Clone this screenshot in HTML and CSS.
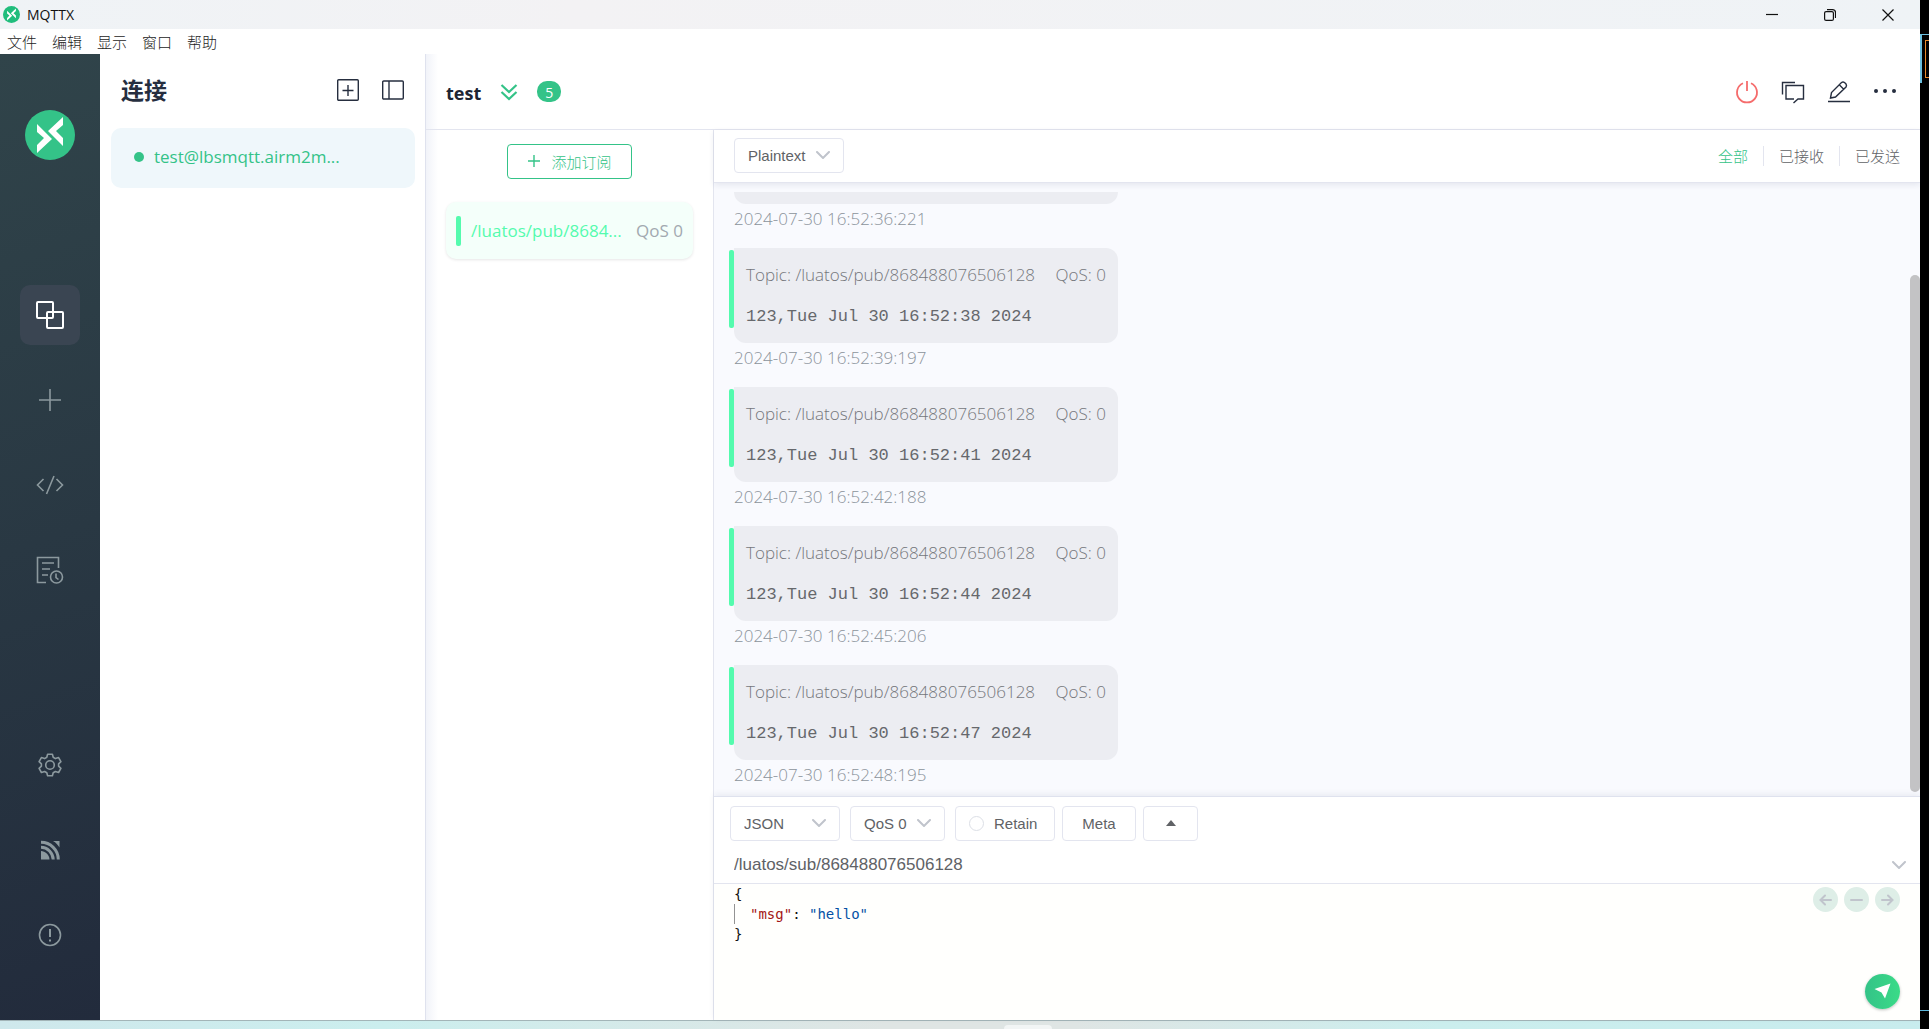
FILE: index.html
```html
<!DOCTYPE html>
<html lang="zh-CN">
<head>
<meta charset="utf-8">
<title>MQTTX</title>
<link rel="stylesheet" href="styles.css">
</head>
<body>
<svg class="defs" aria-hidden="true">
  <symbol id="logo" viewBox="0 0 50 50">
    <circle cx="25" cy="25" r="25"/>
    <path fill="#fff" d="M38 7v8l-7 6 7 7v8L23 21zM12 14l15 15-15 14v-8l7-7-7-6z"/>
  </symbol>
  <symbol id="chevron" viewBox="0 0 14 8"><path d="M1 1l6 6 6-6" fill="none" stroke="#c0c4cc" stroke-width="2" stroke-linecap="round"/></symbol>
</svg>
<div class="desktop">
  <div class="window">
    <header class="titlebar">
      <svg class="app-icon"><use href="#logo"/></svg>
      <span class="app-name">MQTTX</span>
      <div class="win-controls">
        <button aria-label="最小化"><svg width="12" height="12" viewBox="0 0 12 12"><path d="M0 5.5h12"/></svg></button>
        <button aria-label="还原"><svg width="12" height="12" viewBox="0 0 12 12"><rect x=".6" y="2.6" width="8.8" height="8.8" rx="1.5"/><path d="M3 .6h5.5a3 3 0 0 1 3 3V9"/></svg></button>
        <button aria-label="关闭"><svg width="12" height="12" viewBox="0 0 12 12"><path d="M.5.5l11 11M11.5.5l-11 11"/></svg></button>
      </div>
    </header>
    <nav class="menubar">
      <button>文件</button><button>编辑</button><button>显示</button><button>窗口</button><button>帮助</button>
    </nav>
    <div class="body">
      <aside class="leftbar">
        <svg class="logo"><use href="#logo"/></svg>
        <nav class="nav-group">
          <button class="nav-item active" aria-label="连接"><svg width="28" height="28" viewBox="0 0 28 28"><rect x="1" y="1" width="16" height="16" rx="1"/><rect x="11" y="11" width="16" height="16" rx="1"/></svg></button>
          <button class="nav-item" aria-label="新建"><svg width="28" height="28" viewBox="0 0 28 28"><path d="M14 3v22M3 14h22"/></svg></button>
          <button class="nav-item" aria-label="脚本"><svg width="28" height="28" viewBox="0 0 28 28"><path d="M7.500 8l-6 6 6 6M20.500 8l6 6-6 6M18 5l-7.500 18"/></svg></button>
          <button class="nav-item" aria-label="日志"><svg width="28" height="28" viewBox="0 0 28 28"><path d="M10 26.500H1.500v-25h21V12M6 7h12M6 13h8M6 19h6"/><circle cx="20.500" cy="21" r="6"/><path d="M20 17.500v4l2.500 2"/></svg></button>
        </nav>
        <nav class="nav-group bottom">
          <button class="nav-item" aria-label="设置"><svg width="28" height="28" viewBox="0 0 28 28"><circle cx="14" cy="14" r="4.300"/><path stroke-linejoin="round" d="M11.600 3.200h4.800l.8 3.100 2.200 1.300 3.200-1 2.300 4.100-2.300 2.200v2.300l2.300 2.200-2.300 4.100-3.200-1-2.200 1.300-.8 3h-4.800l-.8-3-2.200-1.300-3.200 1-2.300-4.100 2.300-2.200v-2.300l-2.300-2.200 2.300-4.100 3.200 1 2.200-1.300z"/></svg></button>
          <button class="nav-item" aria-label="订阅源"><svg width="28" height="28" viewBox="0 0 28 28"><path class="solid" d="M5 15c4 0 8.500 4 8.500 8.500H5z"/><path stroke-width="3" d="M5 11.300c6.500 0 12.200 5.700 12.200 12.200M5 6.300c9.500 0 17.300 7.700 17.300 17.200"/><path class="solid" d="M17 5h6.500v6.500C22 9 20 6.500 17 5z"/></svg></button>
          <button class="nav-item" aria-label="关于"><svg width="28" height="28" viewBox="0 0 28 28"><circle cx="14" cy="14" r="10.500"/><path stroke-width="2" d="M14 8v8M14 18.500v2"/></svg></button>
        </nav>
      </aside>

      <section class="connections">
        <div class="conn-head">
          <h1>连接</h1>
          <button aria-label="新建连接"><svg width="24" height="24" viewBox="0 0 24 24"><rect x="1.700" y="1.700" width="20.600" height="20.600" rx="1"/><path d="M12 7v11M6.500 12.500h11"/></svg></button>
          <button aria-label="折叠列表"><svg width="24" height="24" viewBox="0 0 24 24"><rect x="1.700" y="3" width="20.600" height="18" rx="1"/><path d="M8 3v18"/></svg></button>
        </div>
        <a class="conn-item" href="#test"><i class="dot"></i>test@lbsmqtt.airm2m...</a>
      </section>

      <main class="main">
        <header class="main-head">
          <h2>test</h2>
          <button class="fold" aria-label="展开"><svg width="18" height="18" viewBox="0 0 18 18"><path d="M1.500 2l7.500 7 7.500-7M1.500 9l7.500 7 7.500-7"/></svg></button>
          <span class="badge">5</span>
          <div class="actions">
            <button class="danger" aria-label="断开连接"><svg width="24" height="24" viewBox="0 0 24 24"><path d="M8 3.300a10 10 0 1 0 8 0M12 1v10"/></svg></button>
            <button aria-label="新窗口"><svg width="24" height="24" viewBox="0 0 24 24"><path d="M1.500 14.500v-12H14M13 19H5V5.500h17.500V19H17l-4.500 4"/></svg></button>
            <button aria-label="编辑"><svg width="24" height="24" viewBox="0 0 24 24"><path d="M1 21.500h22M3.500 18l1-5.500L14.500 2.500q1.500-1 3 0l1.500 1.500q1 1.500 0 3L8.500 17zM12.500 5l4 4"/></svg></button>
            <button aria-label="更多"><svg width="24" height="24" viewBox="0 0 24 24"><path class="dots" d="M3 11h.01M12 11h.01M21 11h.01"/></svg></button>
          </div>
        </header>
        <div class="content">
          <section class="subs">
            <button class="add-sub"><svg width="14" height="14" viewBox="0 0 14 14"><path d="M7 1v12M1 7h12"/></svg>添加订阅</button>
            <a class="sub-item" href="#sub"><i class="mark"></i><span class="topic">/luatos/pub/8684...</span><span class="qos">QoS 0</span></a>
          </section>
          <section class="chat">
            <div class="filter">
              <label class="picker"><select aria-label="格式"><option>Plaintext</option></select><svg class="arrow"><use href="#chevron"/></svg></label>
              <div class="tabs"><button class="on">全部</button><button>已接收</button><button>已发送</button></div>
            </div>
            <div class="messages">
              <div class="list">
                <article><div class="bubble"></div><time>2024-07-30 16:52:36:221</time></article>
                <article><div class="bubble"><p class="meta"><span>Topic: /luatos/pub/868488076506128</span><span>QoS: 0</span></p><pre>123,Tue Jul 30 16:52:38 2024</pre></div><time>2024-07-30 16:52:39:197</time></article>
                <article><div class="bubble"><p class="meta"><span>Topic: /luatos/pub/868488076506128</span><span>QoS: 0</span></p><pre>123,Tue Jul 30 16:52:41 2024</pre></div><time>2024-07-30 16:52:42:188</time></article>
                <article><div class="bubble"><p class="meta"><span>Topic: /luatos/pub/868488076506128</span><span>QoS: 0</span></p><pre>123,Tue Jul 30 16:52:44 2024</pre></div><time>2024-07-30 16:52:45:206</time></article>
                <article><div class="bubble"><p class="meta"><span>Topic: /luatos/pub/868488076506128</span><span>QoS: 0</span></p><pre>123,Tue Jul 30 16:52:47 2024</pre></div><time>2024-07-30 16:52:48:195</time></article>
              </div>
              <div class="scroll"></div>
            </div>
            <form class="publish">
              <div class="options">
                <label class="picker json"><select aria-label="编码"><option>JSON</option></select><svg class="arrow"><use href="#chevron"/></svg></label>
                <label class="picker level"><select aria-label="QoS"><option>QoS 0</option></select><svg class="arrow"><use href="#chevron"/></svg></label>
                <label class="retain"><input type="radio" name="retain">Retain</label>
                <button type="button" class="box meta-btn">Meta</button>
                <button type="button" class="box fold-btn" aria-label="收起"><svg width="10" height="6" viewBox="0 0 10 6"><path d="M0 6l5-6 5 6z" fill="#606266"/></svg></button>
              </div>
              <div class="topic-row">
                <input type="text" aria-label="Topic" value="/luatos/sub/868488076506128">
                <svg class="arrow"><use href="#chevron"/></svg>
              </div>
              <div class="editor">
                <div class="code"><div>{</div><div class="indent"><span class="key">"msg"</span>: <span class="str">"hello"</span></div><div>}</div></div>
                <div class="side">
                  <div class="history">
                    <button type="button" aria-label="上一条"><svg width="13" height="12" viewBox="0 0 13 12"><path d="M12 6H1.500M6 1.500L1.500 6 6 10.500"/></svg></button>
                    <button type="button" aria-label="清除"><svg width="13" height="12" viewBox="0 0 13 12"><path d="M1 6h11"/></svg></button>
                    <button type="button" aria-label="下一条"><svg width="13" height="12" viewBox="0 0 13 12"><path d="M1 6h10.500M7 1.500L11.500 6 7 10.500"/></svg></button>
                  </div>
                  <button type="button" class="send" aria-label="发送"><svg width="17" height="17" viewBox="0 0 17 17"><path fill="#fff" d="M16.500.5L11 15.500 7.500 9.500.5 6z"/></svg></button>
                </div>
              </div>
            </form>
          </section>
        </div>
      </main>
    </div>
  </div>
  <div class="edge"><div class="edge-mark"><i></i></div><div class="edge-line"></div></div>
  <footer class="wallpaper"><div class="handle"></div></footer>
</div>
</body>
</html>
```
FILE: styles.css
```css
* { box-sizing: border-box; margin: 0; padding: 0; }
body {
  font: 17px "Open Sans", "Noto Sans CJK SC", sans-serif;
  color: #262e3f;
}
button { background: none; border: 0; font: inherit; color: inherit; }
button, select { cursor: pointer; }
a { text-decoration: none; }
svg { display: block; flex: none; }
.defs { position: absolute; width: 0; height: 0; }

.desktop {
  height: 100vh;
  display: grid;
  grid-template: minmax(0, 1fr) 9px / minmax(0, 1fr) 9px;
}
.window { display: flex; flex-direction: column; background: #fff; min-height: 0; }
.wallpaper {
  grid-area: 2 / 1;
  border-top: 1px solid #a3b5b8;
  background: linear-gradient(90deg, #cfe8ec, #cbeeee 20%, #dfe5e4 46%, #dfe5e4 56%, #cbeeee 75%, #c8ecee);
  display: flex;
  justify-content: center;
  align-items: flex-end;
}
.handle { width: 48px; height: 4px; margin-left: 136px; border-radius: 4px 4px 0 0; background: #f2f5f5; }
.edge { grid-area: 1 / 2 / 3 / 3; background: #000; padding-top: 34px; display: flex; flex-direction: column; }
.edge-mark { height: 49px; border-top: 1px solid #6cc0e0; border-left: 2px solid #6cc0e0; padding: 5px 0 0 3px; }
.edge-mark i { display: block; height: 38px; border: 1px solid #ea8a2c; border-right: 0; }
.edge-line { margin-top: auto; margin-bottom: 18px; height: 1px; background: #5cb8dc; }

.titlebar { height: 29px; display: flex; align-items: center; background: linear-gradient(90deg, #eff3f6, #f3f2f4 30%, #eff3f6); padding-left: 3px; }
.app-icon { width: 17px; height: 17px; fill: #1fbd7c; margin-right: 7px; }
.app-name { font-size: 14px; color: #111; }
.win-controls { margin-left: auto; display: flex; padding-right: 3px; }
.win-controls button { width: 58px; height: 28px; display: grid; place-items: center; }
.win-controls svg { fill: none; stroke: #111; stroke-width: 1.2; }

.menubar { height: 25px; display: flex; align-items: center; gap: 15px; padding-left: 7px; font-size: 15px; line-height: 20px; font-weight: 300; color: #1c1c1c; }

.body { flex: 1; display: flex; min-height: 0; }
.leftbar {
  width: 100px;
  display: flex;
  flex-direction: column;
  align-items: center;
  padding: 56px 0 55px;
  background: linear-gradient(160deg, #30444a, #293843 50%, #222b3c);
}
.logo { width: 50px; height: 50px; fill: #34c388; margin-bottom: 125px; }
.nav-group { display: flex; flex-direction: column; gap: 25px; }
.bottom { margin-top: auto; }
.nav-item { width: 60px; height: 60px; border-radius: 10px; display: grid; place-items: center; }
.nav-item svg { fill: none; stroke: #8c999e; stroke-width: 1.6; }
.nav-item .solid { fill: #8c999e; stroke: none; }
.nav-item.active { background: #3a4552; }
.nav-item.active svg { stroke: #fff; stroke-width: 2; }

.connections { width: 326px; border-right: 1px solid #dfe2ee; padding: 0 10px 0 11px; }
.conn-head { height: 74px; display: flex; align-items: center; gap: 21px; padding: 0 10px 2px; }
.conn-head h1 { font-size: 23px; line-height: 30px; margin-right: auto; }
.conn-head svg, .actions svg { fill: none; stroke: #262e3f; stroke-width: 1.4; }
.conn-item {
  height: 60px;
  border-radius: 10px;
  background: #eff7fb;
  display: flex;
  align-items: center;
  gap: 10px;
  padding: 0 23px 4px;
  color: #34c388;
  font-weight: 500;
}
.dot { width: 10px; height: 10px; border-radius: 50%; background: #34c388; margin-top: 2px; }

.main { flex: 1; min-width: 0; display: flex; flex-direction: column; background: linear-gradient(90deg, #f1f3f9, #fff 12px); }
.main-head { height: 76px; display: flex; align-items: center; padding: 0 23px 0 20px; border-bottom: 1px solid #e3e5ef; }
.main-head h2 { font-size: 18px; line-height: 24px; padding-top: 2px; color: #1d2433; }
.fold { margin-left: 19px; }
.fold svg { fill: none; stroke: #34c388; stroke-width: 2.2; }
.badge { margin-left: 19px; width: 24px; height: 21px; border-radius: 10px; background: #34c388; color: #fff; font-size: 14px; line-height: 23px; text-align: center; }
.actions { margin-left: auto; display: flex; gap: 22px; }
.actions .danger svg { stroke: #f56c6c; stroke-width: 1.8; }
.actions .dots { stroke-width: 4; stroke-linecap: round; }

.content { flex: 1; display: flex; min-height: 0; }
.subs { width: 288px; border-right: 1px solid #e3e5ef; padding: 14px 20px; display: flex; flex-direction: column; align-items: center; gap: 23px; }
.add-sub { width: 125px; height: 35px; border: 1px solid #34c388; border-radius: 4px; color: #34c388; font-size: 15px; font-weight: 300; padding-bottom: 1px; display: flex; align-items: center; justify-content: center; gap: 10px; }
.add-sub svg { fill: none; stroke: #34c388; stroke-width: 1.4; }
.sub-item { align-self: stretch; height: 57px; border-radius: 10px; background: #f4fffa; box-shadow: 0 1px 3px #0000001a; display: flex; align-items: center; padding: 0 10px; color: #54fbae; }
.mark { width: 5px; height: 30px; border-radius: 2px; background: #54fbae; margin-right: 10px; }
.qos { margin-left: auto; color: #a2a9b0; }

.chat { flex: 1; min-width: 0; display: flex; flex-direction: column; background: #fff; }
.filter { height: 53px; display: flex; align-items: flex-start; justify-content: space-between; padding: 8px 20px; border-bottom: 1px solid #e3e5ef; box-shadow: 0 2px 6px #1b2a5018; z-index: 1; }
.picker { position: relative; display: block; width: 110px; }
.arrow { width: 14px; height: 8px; }
.picker .arrow { position: absolute; right: 14px; top: 13px; pointer-events: none; }
.picker select { appearance: none; width: 100%; height: 35px; padding: 0 13px; border: 1px solid #e3e5ef; border-radius: 4px; background: #fff; color: #606266; font: 15px "Liberation Sans", sans-serif; }
.tabs { display: flex; padding-top: 8px; font-size: 15px; line-height: 20px; font-weight: 300; color: #606266; }
.tabs button { padding: 0 15px; }
.tabs button + button { border-left: 1px solid #e3e5ef; }
.tabs button:last-child { padding-right: 0; }
.tabs .on { color: #34c388; }

.messages { flex: 1; min-height: 0; display: flex; background: #f9fafe; padding-top: 9px; }
.list { flex: 1; display: flex; flex-direction: column; justify-content: flex-end; padding: 0 15px 7px; overflow: hidden; gap: 15px; }
.list article { flex: none; }
.bubble { position: relative; width: 384px; max-width: 100%; height: 95px; margin-left: 5px; border-radius: 0 12px 12px; background: #ecedf2; padding: 14px 12px; }
.bubble::before { content: ""; position: absolute; left: -5px; top: 2px; width: 5px; height: 78px; border-radius: 2px; background: #54fbae; }
.meta { display: flex; justify-content: space-between; line-height: 25px; font-weight: 300; color: #75777c; }
.bubble pre { margin-top: 18px; font: 17px/24px "Liberation Mono", monospace; color: #66686c; }
.list time { display: block; height: 29px; line-height: 29px; margin-left: 5px; font-weight: 300; color: #8b939b; }
.scroll { width: 10px; margin: 83px 0 4px; border-radius: 5px; background: #c3c3c5; }

.publish { border-top: 1px solid #dfe2ee; box-shadow: 0 -2px 6px #1b2a5012; z-index: 1; }
.options { height: 46px; display: flex; align-items: center; padding: 6px 16px 0; }
.level { width: 95px; margin-left: 10px; }
.retain, .box { height: 35px; border: 1px solid #e3e5ef; border-radius: 4px; display: flex; align-items: center; color: #606266; font: 15px "Liberation Sans", sans-serif; }
.retain { width: 100px; margin-left: 10px; padding-left: 13px; gap: 10px; font-size: 15px; }
.retain input { appearance: none; width: 15px; height: 15px; border: 1px solid #dcdfe6; border-radius: 50%; }
.box { justify-content: center; margin-left: 7px; }
.meta-btn { width: 74px; }
.fold-btn { width: 55px; }
.topic-row { height: 41px; display: flex; align-items: center; padding: 4px 14px 0 20px; border-bottom: 1px solid #e3e5ef; }
.topic-row input { flex: 1; border: 0; outline: 0; background: none; color: #606266; font: 17px "Liberation Sans", sans-serif; }
.editor { height: 136px; display: flex; justify-content: space-between; background: #fffffd; padding: 0 20px 11px; }
.code { font: 14px/20px "DejaVu Sans Mono", monospace; color: #111; }
.indent { border-left: 1px solid #939393; padding-left: 15px; }
.key { color: #a31515; }
.str { color: #0451a5; }
.side { display: flex; flex-direction: column; justify-content: space-between; align-items: flex-end; padding-top: 3px; }
.history { display: flex; gap: 6px; }
.history button { width: 25px; height: 25px; border-radius: 50%; background: #deeee7; display: grid; place-items: center; }
.history svg { fill: none; stroke: #c0c4cc; stroke-width: 2; stroke-linecap: round; }
.send { width: 35px; height: 35px; border-radius: 50%; background: linear-gradient(90deg, #34c388, #3adb87); box-shadow: 0 1px 3px #00000040; display: grid; place-items: center; }
```
